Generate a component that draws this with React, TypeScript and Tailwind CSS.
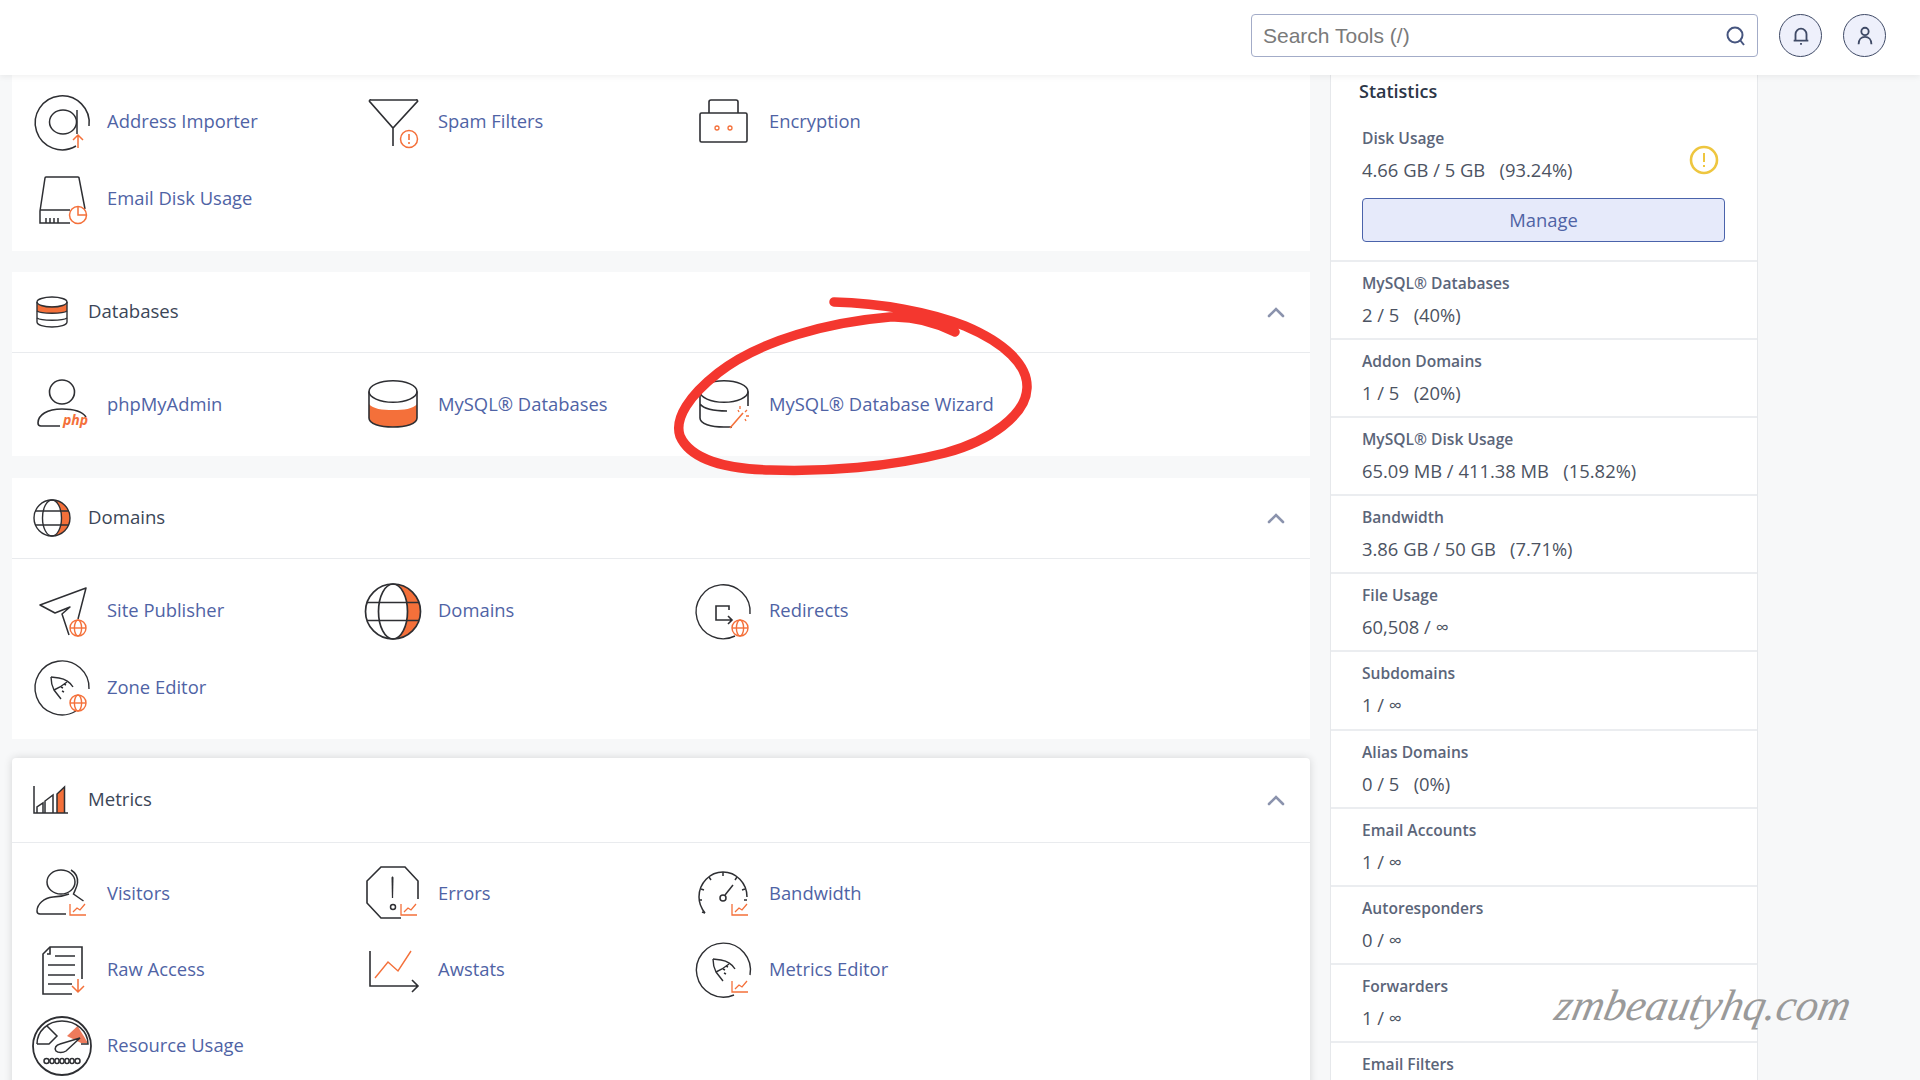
import React from 'react';

const DARK = '#2e2f33';
const ORANGE = '#f4703a';

// small orange badges that sit on the lower right of the tool icons
const GlobeBadge = ({ x, y, r = 8 }: { x: number; y: number; r?: number }) => (
  <g fill="#fff" stroke={ORANGE} strokeWidth="1.4">
    <circle cx={x} cy={y} r={r} />
    <ellipse cx={x} cy={y} rx={r * 0.45} ry={r} fill="none" />
    <path d={`M${x - r} ${y}H${x + r}`} />
  </g>
);

const ChartBadge = ({ x = 38, y = 40 }: { x?: number; y?: number }) => (
  <g fill="none" stroke={ORANGE} strokeWidth="1.3">
    <path d={`M${x} ${y}v11h16`} />
    <path d={`M${x + 3} ${y + 8}l4-4 3 2 5-6`} />
  </g>
);

const Rocket = () => (
  <g fill="none" stroke={DARK} strokeWidth="1.4">
    <path d="M19 19l8 1c6 1 11 4 14 9" />
    <path d="M19 19c0 5 1 9 3 13l7 9" />
    <path d="M22 32l6-3 7-5" />
    <path d="M29 29l2 1M30 33l2 1M32 26l2 1" />
  </g>
);

const Db = ({ children }: { children?: React.ReactNode }) => (
  <g fill="none" stroke={DARK} strokeWidth="1.6">{children}</g>
);

const icons: Record<string, React.ReactNode> = {
  address: (
    <>
      <g fill="none" stroke={DARK} strokeWidth="1.5">
        <path d="M44 54a27 27 0 1 1 13-20" />
        <ellipse cx="31" cy="30" rx="13.5" ry="12" />
        <path d="M45 18v24" />
      </g>
      <path d="M46 56V43m-5 5l5-5 5 5" fill="none" stroke={ORANGE} strokeWidth="1.5" />
    </>
  ),
  spam: (
    <>
      <path d="M8 8h45a1 1 0 0 1 1 2L30 36 7 10a1 1 0 0 1 1-2zM30 36v18" fill="none" stroke={DARK} strokeWidth="1.6" />
      <circle cx="46" cy="47" r="8.5" fill="#fff" stroke={ORANGE} strokeWidth="1.5" />
      <path d="M46 42v6M46 50v2" stroke={ORANGE} strokeWidth="1.6" />
    </>
  ),
  encryption: (
    <>
      <rect x="6" y="21" width="47" height="29" rx="1.5" fill="none" stroke={DARK} strokeWidth="1.6" />
      <path d="M15 21v-11a2 2 0 0 1 2-2h25a2 2 0 0 1 2 2v11" fill="none" stroke={DARK} strokeWidth="1.6" />
      <circle cx="23" cy="36" r="2" fill="none" stroke={ORANGE} strokeWidth="1.3" />
      <circle cx="36" cy="36" r="2" fill="none" stroke={ORANGE} strokeWidth="1.3" />
    </>
  ),
  disk: (
    <>
      <path d="M38 54H8V42l5-33a1 1 0 0 1 1-1h32a1 1 0 0 1 1 1l6 31M8 41h30M14 54v-5M18 54v-5M22 54v-5M26 54v-5" fill="none" stroke={DARK} strokeWidth="1.5" />
      <circle cx="46" cy="46" r="8.5" fill="#fff" stroke={ORANGE} strokeWidth="1.5" />
      <path d="M46 38v8h8" fill="none" stroke={ORANGE} strokeWidth="1.5" />
    </>
  ),
  phpmyadmin: (
    <>
      <ellipse cx="30" cy="17" rx="12.5" ry="12" fill="none" stroke={DARK} strokeWidth="1.6" />
      <path d="M54 42c-4-6-13-8-24-8-15 0-24 6-24 14 0 2 1 3 3 3h19" fill="none" stroke={DARK} strokeWidth="1.6" />
      <text x="31" y="50" fontSize="14" fontWeight="700" fontStyle="italic" fontFamily="Open Sans" fill={ORANGE}>php</text>
    </>
  ),
  mysql: (
    <>
      <path d="M6 29c4 5 13 6 24 6s20-1 24-6v14c0 6-11 9-24 9S6 49 6 43z" fill={ORANGE} />
      <Db>
        <ellipse cx="30" cy="16.500" rx="24" ry="10.800" />
        <path d="M6 16.500V43c0 6 11 9 24 9s24-3 24-9V16.500" />
      </Db>
    </>
  ),
  wizard: (
    <>
      <Db>
        <ellipse cx="30" cy="16.500" rx="24" ry="10.800" />
        <path d="M6 16.500V43c0 6 11 9 24 9h8M54 16.500V31M6 29c4 5 13 7 27 7" />
      </Db>
      <path d="M36 53l13-15" stroke={ORANGE} strokeWidth="1.6" />
      <path d="M46 31v3M53 35l-2 2M55 41h-3M44 35l1 2M52 46l-1-2" stroke={ORANGE} strokeWidth="1.3" />
    </>
  ),
  domains: (
    <>
      <path d="M30 3a27.500 27.500 0 0 1 0 55a14.500 27.500 0 0 0 0-55z" fill={ORANGE} />
      <g fill="none" stroke={DARK} strokeWidth="1.7">
        <circle cx="30" cy="30.500" r="27.500" />
        <ellipse cx="30" cy="30.500" rx="14.500" ry="27.500" />
        <path d="M4 21.500h52M4 39.500h52" />
      </g>
    </>
  ),
  publisher: (
    <>
      <path d="M46 38l8-31L8 24l15 8 15-6-8 7 7 21" fill="none" stroke={DARK} strokeWidth="1.5" strokeLinejoin="round" />
      <GlobeBadge x={46} y={47} />
    </>
  ),
  zone: (
    <>
      <path d="M44 53a27 27 0 1 1 13-22" fill="none" stroke={DARK} strokeWidth="1.4" />
      <Rocket />
      <GlobeBadge x={46} y={45} />
    </>
  ),
  redirects: (
    <>
      <path d="M41 55a27 27 0 1 1 15-22" fill="none" stroke={DARK} strokeWidth="1.4" />
      <path d="M35 29v-4H22v14h15m-3-4l4 4-4 4" fill="none" stroke={DARK} strokeWidth="1.6" />
      <GlobeBadge x={46} y={47} />
    </>
  ),
  visitors: (
    <>
      <g fill="none" stroke={DARK} strokeWidth="1.5">
        <ellipse cx="29" cy="18" rx="14" ry="12" />
        <path d="M39 6c5 3 7 8 6.500 13-.5 4-2.500 7-4 11l10 7" />
        <path d="M37 30c-5 2-10 3-16 3-9 1-16 7-16 14 0 2 1 3 3 3h26" />
      </g>
      <ChartBadge x={38} y={40} />
    </>
  ),
  errors: (
    <>
      <path d="M55 35V17L42 3H18L4 17v22l14 15h20" fill="none" stroke={DARK} strokeWidth="1.6" />
      <path d="M28.500 14c0-2 2-2 2 0l-.4 20h-1.200z" fill={DARK} />
      <circle cx="30" cy="43" r="2.500" fill="none" stroke={DARK} strokeWidth="1.5" />
      <ChartBadge x={38} y={40} />
    </>
  ),
  bandwidth: (
    <>
      <g fill="none" stroke={DARK} strokeWidth="1.5">
        <path d="M11 49C7 44 5 39 5 33 5 19 16 8 29 8s24 11 24 25" />
        <path d="M29 8v4M15 13l2 3M43 13l-2 3M7 25l3 1M51 25l-3 1M5 36h3M53 36h-3M8 48l3 1" />
        <circle cx="29" cy="34" r="3" />
        <path d="M31 31l8-10" />
      </g>
      <ChartBadge x={38} y={40} />
    </>
  ),
  raw: (
    <>
      <path d="M50 39V7H18l-7 7v40h29" fill="none" stroke={DARK} strokeWidth="1.6" />
      <path d="M18 7v7h-3M23 16h20M16 25h27M16 35h27M16 44h24" fill="none" stroke={DARK} strokeWidth="1.6" />
      <path d="M46 52V39m-6 7l6 6 6-6" fill="none" stroke={ORANGE} strokeWidth="1.5" />
    </>
  ),
  awstats: (
    <>
      <path d="M7 11v35h48m-6-6l6 6-6 6" fill="none" stroke={DARK} strokeWidth="1.6" />
      <path d="M12 38l13-16 10 9 13-20" fill="none" stroke={ORANGE} strokeWidth="1.4" />
    </>
  ),
  'metrics-editor': (
    <>
      <path d="M40 55a27 27 0 1 1 16-20" fill="none" stroke={DARK} strokeWidth="1.4" />
      <Rocket />
      <ChartBadge x={38} y={41} />
    </>
  ),
  resource: (
    <>
      <circle cx="30" cy="30" r="29" fill="none" stroke={DARK} strokeWidth="1.8" />
      <path d="M45.500 10l10.500 17H49L35 20z" fill="#ee7b5c" />
      <g fill="none" stroke={DARK} strokeWidth="1.500">
        <path d="M5 28c0-13 11-23 25-23s26 10 26 23H49" />
        <path d="M15 10l10 10-8 8H5" />
        <path d="M24 35c-2-3 0-6 4-7l20-6-14 13c-3 2-8 2-10 0z" fill="#fff" />
      </g>
      <g fill="none" stroke={DARK} strokeWidth="1.500">
        <rect x="12" y="42.500" width="5" height="5" rx="2.500" />
        <rect x="18" y="42.500" width="4" height="5" rx="2" />
        <rect x="23" y="42.500" width="4" height="5" rx="2" />
        <rect x="28" y="42.500" width="4" height="5" rx="2" />
        <rect x="33" y="42.500" width="4" height="5" rx="2" />
        <rect x="38" y="42.500" width="4" height="5" rx="2" />
        <rect x="43" y="42.500" width="5" height="5" rx="2.500" />
      </g>
    </>
  ),
};

const headIcons: Record<string, React.ReactNode> = {
  db: (
    <>
      <path d="M5 12c4 3 26 3 30 0v7c-4 3-26 3-30 0z" fill={ORANGE} />
      <g fill="none" stroke={DARK} strokeWidth="1.400">
        <ellipse cx="20" cy="10" rx="15" ry="5" />
        <path d="M5 10v20c0 3 7 5 15 5s15-2 15-5V10" />
        <path d="M5 19c4 3 26 3 30 0M5 26c4 3 26 3 30 0" />
      </g>
    </>
  ),
  globe: (
    <>
      <path d="M20 2a18 18 0 0 1 0 36a9.500 18 0 0 0 0-36z" fill={ORANGE} />
      <g fill="none" stroke={DARK} strokeWidth="1.400">
        <circle cx="20" cy="20" r="18" />
        <ellipse cx="20" cy="20" rx="9.500" ry="18" />
        <path d="M3 13h34M3 27h34" />
      </g>
    </>
  ),
  metrics: (
    <>
      <path d="M25 14l7.500-7v26H25z" fill={ORANGE} />
      <g fill="none" stroke={DARK} strokeWidth="1.500">
        <path d="M2 6v27h34" />
        <path d="M5 33v-6l6-4v10M13 33V21l8-6v18M25 33V14l7.500-7v26" />
      </g>
    </>
  ),
};

type Tool = { name: string; icon: string };

function ToolItem({ tool, rowH = 'h-[77px]' }: { tool: Tool; rowH?: string }) {
  return (
    <a className={`flex items-center gap-[15px] ${rowH}`}>
      <svg width="60" height="60" viewBox="0 0 60 60" className="shrink-0 overflow-visible">
        {icons[tool.icon]}
      </svg>
      <span className="text-[18.4px] pb-[2px] text-[#4f63a5]">{tool.name}</span>
    </a>
  );
}

function Section({ title, icon, tools, headH, className, rowH }: { title: string; icon: string; tools: Tool[]; headH: string; className: string; rowH?: string }) {
  return (
    <section className={`bg-white ${className}`}>
      <div className={`flex items-center justify-between pl-[20px] pr-[25px] border-b border-[#e9ebee] ${headH}`}>
        <div className="flex items-center gap-[16px]">
          <svg width="40" height="40" viewBox="0 0 40 40" className="shrink-0">
            {headIcons[icon]}
          </svg>
          <h2 className="text-[18.6px] pb-[2px] text-[#3b4657]">{title}</h2>
        </div>
        <svg width="18" height="12" viewBox="0 0 18 12" fill="none" stroke="#8b93ad" strokeWidth="2.600" strokeLinecap="round">
          <path d="M2 10l7-7 7 7" />
        </svg>
      </div>
      <div className="grid grid-cols-[331px_331px_331px] px-[20px] py-[13px]">
        {tools.map((t) => (
          <ToolItem key={t.name} tool={t} rowH={rowH} />
        ))}
      </div>
    </section>
  );
}

const stats = [
  { label: 'MySQL® Databases', value: '2 / 5\u00a0\u00a0 (40%)' },
  { label: 'Addon Domains', value: '1 / 5\u00a0\u00a0 (20%)' },
  { label: 'MySQL® Disk Usage', value: '65.09 MB / 411.38 MB\u00a0\u00a0 (15.82%)' },
  { label: 'Bandwidth', value: '3.86 GB / 50 GB\u00a0\u00a0 (7.71%)' },
  { label: 'File Usage', value: '60,508 / ∞' },
  { label: 'Subdomains', value: '1 / ∞' },
  { label: 'Alias Domains', value: '0 / 5\u00a0\u00a0 (0%)' },
  { label: 'Email Accounts', value: '1 / ∞' },
  { label: 'Autoresponders', value: '0 / ∞' },
  { label: 'Forwarders', value: '1 / ∞' },
  { label: 'Email Filters' },
];

function Sidebar() {
  return (
    <aside className="w-[428px] ml-[20px] bg-white border-x border-[#e6e8eb] shrink-0">
      <div className="pl-[31px] pr-[32px] pt-[4px] pb-[18px]">
        <h2 className="text-[18px] leading-6 font-semibold text-[#2c3647] -ml-[3px]">Statistics</h2>
        <div className="flex items-center justify-between mt-[25px]">
          <div>
            <div className="text-[15.6px] leading-5 font-semibold text-[#5b6579]">Disk Usage</div>
            <div className="text-[18.4px] leading-6 mt-[10px] text-[#4c5362]">4.66 GB / 5 GB&nbsp;&nbsp; (93.24%)</div>
          </div>
          <svg width="30" height="30" viewBox="0 0 30 30" fill="none" className="mr-[6px] mt-[10px]">
            <circle cx="15" cy="15" r="13" stroke="#eec63f" strokeWidth="2.600" />
            <path d="M15 8v9M15 20v2" stroke="#eec63f" strokeWidth="2" />
          </svg>
        </div>
        <button className="mt-[16px] w-full h-[44px] rounded-[4px] border border-[#4a63ab] bg-[#e6eafa] text-[18.4px] text-[#4f63a5]">
          Manage
        </button>
      </div>
      {stats.map((s) => (
        <div key={s.label} className="border-t-2 border-[#ebedf0] h-[78.1px] pl-[31px] pt-[11px]">
          <div className="text-[15.6px] leading-5 font-semibold text-[#5b6579]">{s.label}</div>
          {s.value && <div className="text-[18.4px] leading-6 mt-[10px] text-[#4c5362]">{s.value}</div>}
        </div>
      ))}
    </aside>
  );
}

export default function App() {
  return (
    <div className="relative w-[1920px] h-[1080px] overflow-hidden bg-[#f7f8f9] font-['Open_Sans',sans-serif]">
      <header className="relative z-10 flex items-center justify-end h-[75px] bg-white shadow-[0_2px_6px_rgba(0,0,0,0.06)] pr-[34px] pb-[4px]">
        <div className="flex items-center justify-between w-[507px] h-[43px] rounded-[4px] border border-[#a3acc8] pl-[11px] pr-[10px]">
          <span className="font-['Liberation_Sans',sans-serif] text-[21px] text-[#7a7a7a]">Search Tools (/)</span>
          <svg width="22" height="22" viewBox="0 0 22 22" fill="none" stroke="#46557f" strokeWidth="2">
            <circle cx="10" cy="10" r="7.500" />
            <path d="M15 15l4 5" />
          </svg>
        </div>
        <div className="flex items-center justify-center w-[43px] h-[43px] ml-[21px] rounded-full border border-[#3f4a66] bg-[#eef0fb]">
          <svg width="22" height="22" viewBox="0 0 24 24" fill="none" stroke="#3f4a66" strokeWidth="2">
            <path d="M6 17V10a6 6 0 0 1 12 0v7M4 17h16M11 20.500h2" />
          </svg>
        </div>
        <div className="flex items-center justify-center w-[43px] h-[43px] ml-[21px] rounded-full border border-[#3f4a66] bg-[#eef0fb]">
          <svg width="22" height="22" viewBox="0 0 24 24" fill="none" stroke="#3f4a66" strokeWidth="2">
            <circle cx="12" cy="7" r="4" />
            <path d="M5 21c0-5 3-8 7-8s7 3 7 8" />
          </svg>
        </div>
      </header>

      <div className="flex pl-[12px] h-[1005px] overflow-hidden">
        <main className="w-[1298px] shrink-0">
          <div className="bg-white grid grid-cols-[331px_331px_331px] px-[20px] pt-[8px] pb-[14px]">
            <ToolItem tool={{ name: 'Address Importer', icon: 'address' }} />
            <ToolItem tool={{ name: 'Spam Filters', icon: 'spam' }} />
            <ToolItem tool={{ name: 'Encryption', icon: 'encryption' }} />
            <ToolItem tool={{ name: 'Email Disk Usage', icon: 'disk' }} />
          </div>
          <Section
            title="Databases"
            icon="db"
            headH="h-[81px]"
            className="mt-[21px]"
            tools={[
              { name: 'phpMyAdmin', icon: 'phpmyadmin' },
              { name: 'MySQL® Databases', icon: 'mysql' },
              { name: 'MySQL® Database Wizard', icon: 'wizard' },
            ]}
          />
          <Section
            title="Domains"
            icon="globe"
            headH="h-[81px]"
            className="mt-[22px]"
            tools={[
              { name: 'Site Publisher', icon: 'publisher' },
              { name: 'Domains', icon: 'domains' },
              { name: 'Redirects', icon: 'redirects' },
              { name: 'Zone Editor', icon: 'zone' },
            ]}
          />
          <Section
            title="Metrics"
            icon="metrics"
            headH="h-[85px]"
            rowH="h-[76px]"
            className="mt-[19px] rounded-t-[4px] shadow-[0_0_8px_rgba(0,0,0,0.14)]"
            tools={[
              { name: 'Visitors', icon: 'visitors' },
              { name: 'Errors', icon: 'errors' },
              { name: 'Bandwidth', icon: 'bandwidth' },
              { name: 'Raw Access', icon: 'raw' },
              { name: 'Awstats', icon: 'awstats' },
              { name: 'Metrics Editor', icon: 'metrics-editor' },
              { name: 'Resource Usage', icon: 'resource' },
            ]}
          />
        </main>
        <Sidebar />
      </div>

      {/* hand drawn circle over the wizard item */}
      <svg className="absolute left-0 top-0 pointer-events-none z-20" width="1920" height="1080" fill="none">
        <path
          d="M834 302C880 303 930 312 965 326C1005 343 1028 365 1027 388C1026 415 990 441 945 453C890 467 825 472 770 470C725 469 690 459 680 436C674 418 690 395 718 373C760 340 830 322 890 317C915 316 935 322 955 332"
          stroke="#f4372f"
          strokeWidth="9.500"
          strokeLinecap="round"
        />
      </svg>

      <div className="absolute left-[1556px] top-[978px] z-20 font-['Liberation_Serif',serif] italic text-[44px] leading-[55px] text-[#9a9a9a] -skew-x-12">
        zmbeautyhq.com
      </div>
    </div>
  );
}
